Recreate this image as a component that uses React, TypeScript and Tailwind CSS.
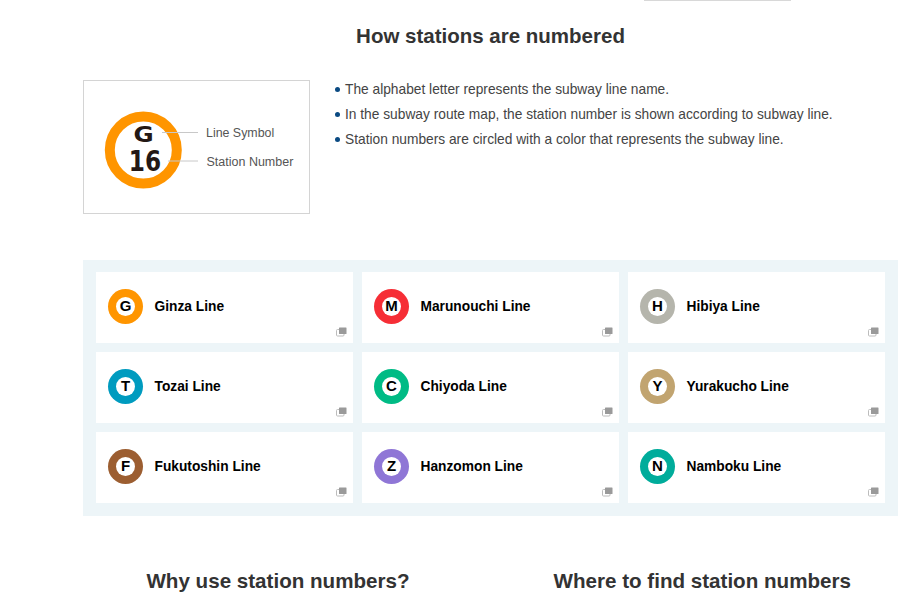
const lines = [
  { letter: "G", name: "Ginza Line", color: "bg-[#ff9500]" },
  { letter: "M", name: "Marunouchi Line", color: "bg-[#f62e36]" },
  { letter: "H", name: "Hibiya Line", color: "bg-[#b5b5ac]" },
  { letter: "T", name: "Tozai Line", color: "bg-[#009bbf]" },
  { letter: "C", name: "Chiyoda Line", color: "bg-[#00bb85]" },
  { letter: "Y", name: "Yurakucho Line", color: "bg-[#c1a470]" },
  { letter: "F", name: "Fukutoshin Line", color: "bg-[#9c5e31]" },
  { letter: "Z", name: "Hanzomon Line", color: "bg-[#8f76d6]" },
  { letter: "N", name: "Namboku Line", color: "bg-[#00ac9b]" },
];

const notes = [
  "The alphabet letter represents the subway line name.",
  "In the subway route map, the station number is shown according to subway line.",
  "Station numbers are circled with a color that represents the subway line.",
];

function WindowIcon() {
  return (
    <svg width="11" height="10" viewBox="0 0 11 10" className="absolute right-[6px] bottom-[6px]">
      <rect x="0.5" y="2.5" width="7.5" height="6.5" rx="1" fill="#fff" stroke="#bcbcbc" />
      <rect x="3" y="0.5" width="7.5" height="6.5" rx="0.5" fill="#9a9a9a" />
    </svg>
  );
}

function NumberDiagram() {
  return (
    <div className="w-[227px] h-[134px] border border-[#d4d4d4] shrink-0">
      <svg width="225" height="132" viewBox="0 0 225 132">
        <circle cx="59.3" cy="69" r="33.5" fill="#fff" stroke="#ff9500" strokeWidth="10" />
        <path d="M78 51.5h36M84 80h30" stroke="#c8c8c8" strokeWidth="1" fill="none" />
        <text
          transform="translate(59.5 60.5) scale(1.2 1)"
          textAnchor="middle"
          fontSize="20.5"
          fontWeight="700"
          fill="#231815"
          fontFamily="'DejaVu Sans', sans-serif"
        >
          G
        </text>
        <text
          transform="translate(61 90) scale(0.83 1)"
          textAnchor="middle"
          fontSize="28"
          fontWeight="700"
          fill="#231815"
          fontFamily="'DejaVu Sans', sans-serif"
        >
          16
        </text>
        <text x="122" y="56" fontSize="12.4" fill="#555" fontFamily="'Liberation Sans', sans-serif">
          Line Symbol
        </text>
        <text x="122.5" y="85" fontSize="12.5" fill="#555" fontFamily="'Liberation Sans', sans-serif">
          Station Number
        </text>
      </svg>
    </div>
  );
}

export default function App() {
  return (
    <div className="relative w-[910px] h-[607px] overflow-hidden bg-white pl-[83px] pr-[12px] font-['Liberation_Sans',sans-serif]">
      <div className="absolute left-[644px] top-0 w-[147px] h-[1px] bg-[#d8d8d8]" />

      <h2 className="pt-[23px] text-center text-[20.5px] leading-[26px] font-bold text-[#333]">
        How stations are numbered
      </h2>

      <div className="flex mt-[31px]">
        <NumberDiagram />
        <ul className="ml-[25px] -mt-[3px] text-[13.75px] leading-[25px] text-[#444]">
          {notes.map((note) => (
            <li key={note} className="flex items-center">
              <span className="w-[5px] h-[5px] rounded-full bg-[#0a4a82] mr-[5px]" />
              {note}
            </li>
          ))}
        </ul>
      </div>

      <div className="grid grid-cols-3 gap-[9px] mt-[46px] px-[13px] pt-[12px] pb-[13px] bg-[#edf5f8]">
        {lines.map((line) => (
          <div key={line.letter} className="relative flex items-center h-[71px] pl-[12px] pb-[2px] bg-white">
            <span className={`flex items-center justify-center w-[35px] h-[35px] rounded-full ${line.color}`}>
              <span className="flex items-center justify-center w-[19px] h-[19px] rounded-full bg-white text-[15px] font-bold text-black">
                {line.letter}
              </span>
            </span>
            <span className="ml-[11.5px] pt-[2px] text-[13.75px] font-bold text-black">{line.name}</span>
            <WindowIcon />
          </div>
        ))}
      </div>

      <div className="grid grid-cols-2 mt-[52px] text-[20.6px] leading-[26px] font-bold text-[#333]">
        <h2 className="text-center -ml-[12px] w-[414px]">Why use station numbers?</h2>
        <h2 className="text-center pl-[16px]">Where to find station numbers</h2>
      </div>
    </div>
  );
}
